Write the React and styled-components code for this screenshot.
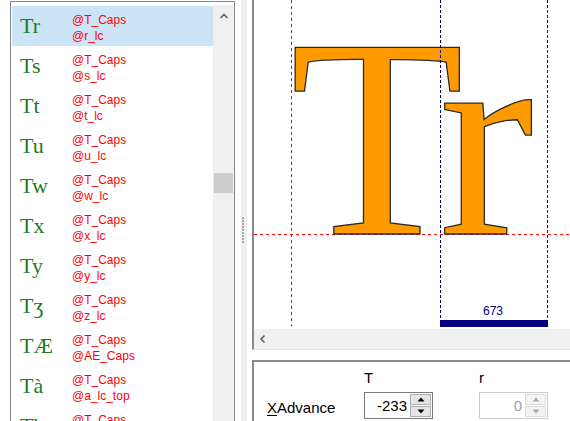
import React from "react"
import styled, { createGlobalStyle } from "styled-components"

const GlobalStyle = createGlobalStyle`
  html, body {
    margin: 0;
    padding: 0;
    background: #fff;
    overflow: hidden;
  }
  #root {
    width: 570px;
    height: 421px;
  }
`

const Window = styled.div`
  display: flex;
  width: 570px;
  height: 421px;
  overflow: hidden;
  background: #fff;
  font-family: "Liberation Sans", Arial, sans-serif;
`

const ListFrame = styled.div`
  box-sizing: border-box;
  flex: none;
  display: flex;
  width: 225px;
  height: 420px;
  margin: 1px 6px 0 10px;
  padding-left: 1px;
  border: 1px solid #828790;
  border-bottom: none;
`

const Rows = styled.div`
  width: 201px;
  padding-top: 4px;
  overflow: hidden;
`

const Row = styled.div`
  display: flex;
  height: 40px;
  background: ${(p) => (p.$selected ? "#cce4f7" : "transparent")};
`

const Glyph = styled.div`
  width: 52px;
  padding-left: 8px;
  font-family: "Liberation Serif", "DejaVu Serif", serif;
  font-size: 22px;
  line-height: 40px;
  color: #1f7a1f;
  white-space: nowrap;
`

const Names = styled.div`
  padding-top: 6px;
  font-size: 12px;
  line-height: 16px;
  color: #ff0000;
`

const VScroll = styled.div`
  width: 21px;
  margin-top: 3px;
  background: #f0f0f0;
  display: flex;
  flex-direction: column;
  align-items: center;
`

const ArrowButton = styled.div`
  display: flex;
  align-items: center;
  justify-content: center;
  width: ${(p) => p.$w || 21}px;
  height: ${(p) => p.$h || 22}px;
`

const Thumb = styled.div`
  width: 19px;
  height: 20px;
  margin-top: ${(p) => p.$offset}px;
  background: #cdcdcd;
`

const Splitter = styled.div`
  flex: none;
  width: 6px;
  margin-right: 5px;
  background: #f0f0f0;
  padding-left: 1px;
  box-sizing: border-box;
`

const Grip = styled.div`
  width: 2px;
  height: 26px;
  margin-top: 217px;
  background: repeating-linear-gradient(to bottom, #a8a8a8 0 2px, transparent 2px 3px);
`

const RightPane = styled.div`
  flex: 1;
  display: flex;
  flex-direction: column;
`

const Canvas = styled.div`
  height: 349px;
  border-left: 2px solid #8a8a8a;
  border-bottom: 1px solid #e3e3e3;
  display: flex;
  flex-direction: column;
`

const HScroll = styled.div`
  height: 20px;
  background: #f0f0f0;
  display: flex;
  align-items: center;
`

const Panel = styled.div`
  flex: 1;
  margin-top: 10px;
  border-top: 2px solid #8a8a8a;
  border-left: 2px solid #8a8a8a;
  display: grid;
  grid-template-columns: 97px 115px 69px;
  grid-template-rows: 20px 27px;
  row-gap: 4px;
  align-content: start;
  padding: 6px 0 0 13px;
  font-size: 15px;
  color: #000;
`

const ColHead = styled.div`
  line-height: 20px;
`

const FieldLabel = styled.div`
  display: flex;
  align-items: center;
  padding-top: 3px;
  u {
    text-decoration-thickness: 1px;
    text-underline-offset: 2px;
  }
`

const Spin = styled.div`
  box-sizing: border-box;
  display: flex;
  width: 69px;
  height: 27px;
  border: 1px solid ${(p) => (p.$disabled ? "#cccccc" : "#7a7a7a")};
  background: #fff;
`

const SpinValue = styled.div`
  flex: 1;
  text-align: right;
  padding-right: 3px;
  line-height: 25px;
  color: ${(p) => (p.$disabled ? "#97a3b5" : "#000")};
`

const SpinButtons = styled.div`
  display: flex;
  flex-direction: column;
  gap: 1px;
  width: 21px;
  padding: 1px 1px 1px 0;
`

const SpinButton = styled.div`
  flex: 1;
  display: flex;
  align-items: center;
  justify-content: center;
  box-sizing: border-box;
  border: 1px solid ${(p) => (p.$disabled ? "#dcdcdc" : "#adadad")};
  background: ${(p) => (p.$disabled ? "#f4f4f4" : "#e5e5e5")};
`

const rows = [
  ["Tr", "@r_lc"],
  ["Ts", "@s_lc"],
  ["Tt", "@t_lc"],
  ["Tu", "@u_lc"],
  ["Tw", "@w_lc"],
  ["Tx", "@x_lc"],
  ["Ty", "@y_lc"],
  ["T\u0292", "@z_lc"],
  ["T\u00c6", "@AE_Caps"],
  ["T\u00e0", "@a_lc_top"],
  ["Tb", "@b_lc"],
]

const Chevron = ({ dir }) => (
  <svg width="10" height="10" viewBox="0 0 10 10">
    <polyline
      points={dir === "up" ? "1.5,7 5,3.5 8.5,7" : "6.5,1.5 3,5 6.5,8.5"}
      fill="none"
      stroke="#606060"
      strokeWidth="1.6"
    />
  </svg>
)

const Tri = ({ up, color }) => (
  <svg width="8" height="5" viewBox="0 0 8 5">
    <polygon points={up ? "0.5,4.5 4,0.5 7.5,4.5" : "0.5,0.5 4,4.5 7.5,0.5"} fill={color} />
  </svg>
)

const SpinBox = ({ value, disabled }) => {
  const c = disabled ? "#a6a6a6" : "#000"
  return (
    <Spin $disabled={disabled}>
      <SpinValue $disabled={disabled}>{value}</SpinValue>
      <SpinButtons>
        <SpinButton $disabled={disabled}>
          <Tri up color={c} />
        </SpinButton>
        <SpinButton $disabled={disabled}>
          <Tri color={c} />
        </SpinButton>
      </SpinButtons>
    </Spin>
  )
}

// glyph view, x is canvas-local (page x - 254)
const GlyphView = () => (
  <svg width="316" height="329" style={{ display: "block" }}>
    <line x1="37.5" y1="0" x2="37.5" y2="326" stroke="#ff0000" strokeDasharray="3 3" />
    <line x1="0" y1="234.5" x2="316" y2="234.5" stroke="#ff0000" strokeDasharray="3 3" />
    <text
      y="234"
      fontFamily="Liberation Serif, serif"
      fontSize="285"
      fill="#ff9a00"
      stroke="#2a2a2a"
      strokeWidth="1.3"
    >
      <tspan x="36">T</tspan>
      <tspan x="185">r</tspan>
    </text>
    <line x1="186.5" y1="0" x2="186.5" y2="321" stroke="#000080" strokeDasharray="3 2" />
    <line x1="293.5" y1="0" x2="293.5" y2="321" stroke="#000080" strokeDasharray="3 2" />
    <text x="239" y="315" textAnchor="middle" fontFamily="Liberation Sans, sans-serif" fontSize="12" fill="#000080">
      673
    </text>
    <rect x="186" y="320" width="108" height="7" fill="#000080" />
  </svg>
)

export default function App() {
  return (
    <Window>
      <GlobalStyle />
      <ListFrame>
        <Rows>
          {rows.map(([g, second], i) => (
            <Row key={i} $selected={i === 0}>
              <Glyph>{g}</Glyph>
              <Names>
                <div>@T_Caps</div>
                <div>{second}</div>
              </Names>
            </Row>
          ))}
        </Rows>
        <VScroll>
          <ArrowButton>
            <Chevron dir="up" />
          </ArrowButton>
          <Thumb $offset={146} />
        </VScroll>
      </ListFrame>
      <Splitter>
        <Grip />
      </Splitter>
      <RightPane>
        <Canvas>
          <GlyphView />
          <HScroll>
            <ArrowButton $w={18} $h={20}>
              <Chevron dir="left" />
            </ArrowButton>
          </HScroll>
        </Canvas>
        <Panel>
          <div />
          <ColHead>T</ColHead>
          <ColHead>r</ColHead>
          <FieldLabel>
            <span>
              <u>X</u>Advance
            </span>
          </FieldLabel>
          <SpinBox value="-233" />
          <SpinBox value="0" disabled />
        </Panel>
      </RightPane>
    </Window>
  )
}
